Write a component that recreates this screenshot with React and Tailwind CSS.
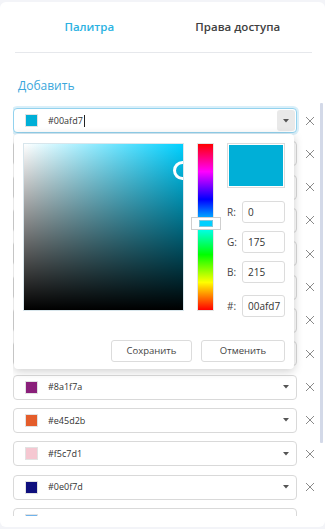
import React from 'react'

const rows = [
  '#00afd7', '#2e7d32', '#f2b705', '#c0392b', '#5d6d7e', '#16a085', '#8e44ad', '#d35400',
  '#8a1f7a', '#e45d2b', '#f5c7d1', '#0e0f7d', '#6fb3ec',
]

function Cross() {
  return (
    <svg width="10" height="10" viewBox="0 0 10 10" className="shrink-0">
      <path d="M1 1L9 9M9 1L1 9" stroke="#8a8a8a" strokeWidth="1" />
    </svg>
  )
}

function Arrow() {
  return (
    <svg width="6" height="4" viewBox="0 0 6 4">
      <path d="M0 0H6L3 3.5Z" fill="#555" />
    </svg>
  )
}

function Row({ color, active, clipped }) {
  return (
    <div className="flex items-center h-[25px] shrink-0">
      <div
        className={
          active
            ? 'flex items-center w-[284px] h-[25px] rounded-[4px] border border-[#93d2ee] bg-white shadow-[0_0_0_2px_rgba(170,220,242,0.45)] pl-[11px] pr-[1px]'
            : 'flex items-center w-[284px] h-[25px] rounded-[4px] border border-[#d9d9d9] bg-white pl-[11px] pr-[1px]'
        }
      >
        <span className="w-[13px] h-[13px] border border-[#e2e2e2] shrink-0" style={{ background: color }} />
        <span className="ml-[10px] text-[9px] text-[#333] flex-1 flex items-center">
          {!clipped && color}
          {active && <span className="inline-block w-px h-[12px] bg-[#222] ml-[1px]" />}
        </span>
        <span
          className={
            active
              ? 'w-[18px] h-[21px] rounded-[3px] bg-[#e9e9e9] flex items-center justify-center'
              : 'w-[18px] h-[21px] flex items-center justify-center'
          }
        >
          <Arrow />
        </span>
      </div>
      <div className="ml-[8px]">
        <Cross />
      </div>
    </div>
  )
}

function Field({ label, value, mt }) {
  return (
    <div className={`flex items-center ${mt}`}>
      <span className="w-[15px] text-[10px] text-[#444]">{label}</span>
      <div className="w-[43px] h-[22px] rounded-[3px] border border-[#dcdcdc] flex items-center pl-[5px] text-[10px] text-[#333]">
        {value}
      </div>
    </div>
  )
}

function Picker() {
  return (
    <div className="absolute left-[1px] top-[31px] w-[280px] h-[235px] bg-white rounded-[4px] shadow-[0_2px_10px_rgba(0,0,0,0.2)] p-[9px] pb-[7px] flex flex-col">
      <div className="flex">
        <div className="relative w-[161px] h-[168px] border border-[#d8e6ec] overflow-hidden bg-[linear-gradient(to_top,#000,transparent),linear-gradient(to_right,#fff,#00d0ff)]">
          <div className="absolute left-[149px] top-[17px] w-[19px] h-[19px] rounded-full border-[3px] border-white" />
        </div>
        <div className="relative ml-[13px] w-[17px] h-[168px] border border-[#e4e4e4] bg-[linear-gradient(to_bottom,#f00,#f0f,#00f,#0ff,#0f0,#ff0,#f00)]">
          <div className="absolute left-[-7px] top-[73px] w-[30px] h-[13px] bg-white border border-[#cfcfcf] flex items-center justify-center">
            <div className="w-[14px] h-[7px] bg-[#00d0ff] border border-[#7fc7dc]" />
          </div>
        </div>
        <div className="ml-[13px] flex flex-col">
          <div className="w-[58px] h-[45px] border border-[#dcdcdc] p-[1px]">
            <div className="w-full h-full bg-[#00afd7]" />
          </div>
          <Field label="R:" value="0" mt="mt-[13px]" />
          <Field label="G:" value="175" mt="mt-[8px]" />
          <Field label="B:" value="215" mt="mt-[8px]" />
          <Field label="#:" value="00afd7" mt="mt-[12px]" />
        </div>
      </div>
      <div className="mt-auto flex justify-end gap-[9px]">
        <button className="w-[81px] h-[22px] rounded-[3px] border border-[#dcdcdc] bg-white text-[9.5px] text-[#444]">
          Сохранить
        </button>
        <button className="w-[84px] h-[22px] rounded-[3px] border border-[#dcdcdc] bg-white text-[9.5px] text-[#444]">
          Отменить
        </button>
      </div>
    </div>
  )
}

export default function App() {
  return (
    <div className="w-[325px] h-[529px] bg-[#f3f4f8] pt-[2px] font-['Open_Sans',sans-serif]">
      <div className="h-[525px] bg-white rounded-[6px] overflow-hidden">
        <div className="mx-[15px] w-[297px] h-[50px] flex items-center border-b border-[#e6e8ec] box-content">
          <div className="flex-1 text-center text-[11.5px] font-semibold text-[#2bb2e2]">Палитра</div>
          <div className="flex-1 text-center text-[11.5px] font-semibold text-[#3f3f3f]">Права доступа</div>
        </div>
        <div className="ml-[18px] mt-[24px] text-[12px] leading-[18px] text-[#3aa7dc]">Добавить</div>
        <div className="relative mt-[8px] ml-[13px] h-[413px] flex overflow-hidden">
          <div className="pt-[5px] flex flex-col gap-[8.33px] w-[302px]">
            {rows.map((c, i) => (
              <Row key={i} color={c} active={i === 0} clipped={i === rows.length - 1} />
            ))}
          </div>
          <div className="ml-[5px] w-[3px] h-[340px] bg-[#d3d9e8] rounded-[1px]" />
          <Picker />
        </div>
      </div>
    </div>
  )
}
